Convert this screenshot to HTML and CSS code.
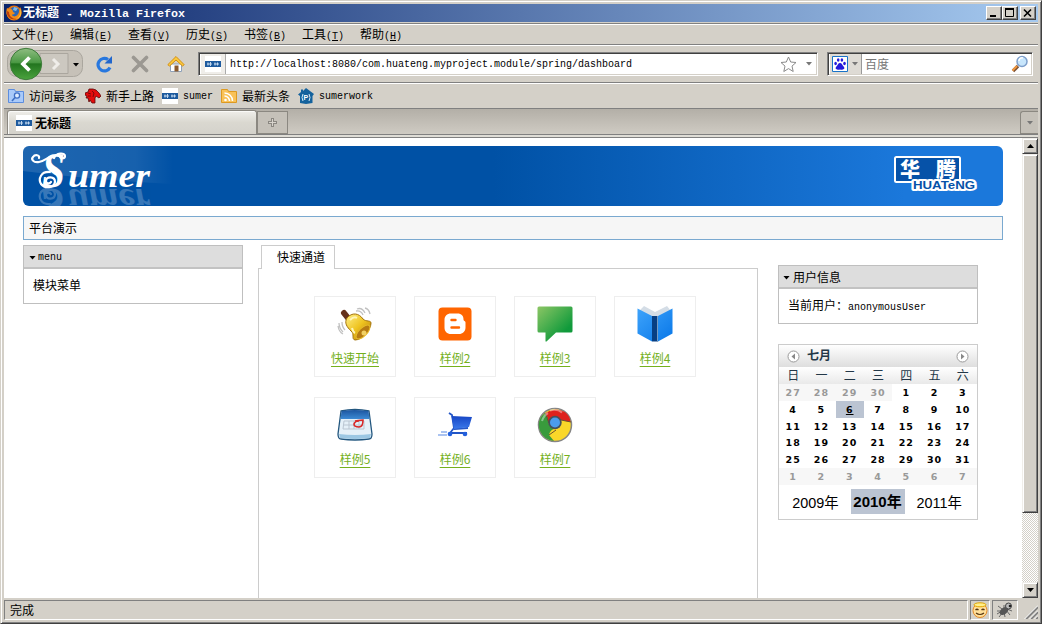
FILE: index.html
```
<!DOCTYPE html>
<html lang="zh-CN">
<head>
<meta charset="utf-8">
<title>无标题</title>
<link rel="stylesheet" href="styles.css">
</head>
<body>
<svg class="defs" width="0" height="0">
  <defs>
    <symbol id="favicon" viewBox="0 0 16 16">
      <rect width="16" height="16" fill="#fff"/>
      <rect y="5" width="16" height="6" fill="#1d5a9e"/>
      <path d="M2 8h5M3 6.500v3M5.500 6v4M9 8h5M10 6.500v3M12.500 6.500v3" stroke="#c3d8ee" stroke-width="1"/>
    </symbol>
    <linearGradient id="green" x2="0" y2="1"><stop offset="0" stop-color="#8fbd82"/><stop offset=".45" stop-color="#4c9a45"/><stop offset=".5" stop-color="#23751f"/><stop offset="1" stop-color="#4ba43e"/></linearGradient>
    <linearGradient id="bubble" x2="1" y2="1"><stop offset="0" stop-color="#8cc665"/><stop offset=".75" stop-color="#109a3b"/></linearGradient>
    <linearGradient id="gold" x2="1" y2="1"><stop offset="0" stop-color="#fff08a"/><stop offset=".5" stop-color="#eec31f"/><stop offset="1" stop-color="#a96e08"/></linearGradient>
    <linearGradient id="blueBox" x2="0" y2="1"><stop offset="0" stop-color="#1c559f"/><stop offset="1" stop-color="#3c8ad4"/></linearGradient>
    <linearGradient id="cart" x2="0" y2="1"><stop offset="0" stop-color="#1746c5"/><stop offset="1" stop-color="#3978ea"/></linearGradient>
    <linearGradient id="page" x2="1" y2="1"><stop offset="0" stop-color="#3ea3fb"/><stop offset="1" stop-color="#0877e8"/></linearGradient>
  </defs>
</svg>
<div class="window">
  <header class="titlebar">
    <svg width="16" height="16" viewBox="0 0 16 16"><circle cx="8" cy="8" r="7.500" fill="#e57512"/><circle cx="8.500" cy="7" r="5" fill="#2d66b4"/><path d="M8 2l4 1-2 3-3-1z" fill="#7fb9e8"/><path d="M1 3l2 1c2-1 4 1 4 3l2 1c-1 2-3 1-3 2 2 3 6 1 7-3l1-5c4 6 0 13-6 13S-1 9 1 3z" fill="#f28b17"/><path d="M1 6c-1 6 5 10 10 8-5 0-8-3-8-7z" fill="#bc3e0d"/><path d="M13 3c3 4 1 9-3 11 5-1 7-7 3-11z" fill="#ffd54a"/></svg>
    <span class="title">无标题<span class="m"> - Mozilla Firefox</span></span>
    <span class="controls">
      <button class="ctl"><svg width="14" height="12"><path d="M3 9h6" stroke="#000" stroke-width="2"/></svg></button><button class="ctl"><svg width="14" height="12"><path d="M2.500 2.500h8v7h-8z" fill="none" stroke="#000"/><path d="M2 2h9" stroke="#000" stroke-width="2"/></svg></button><button class="ctl close"><svg width="14" height="12"><path d="M3 2.500l7 7M10 2.500l-7 7" stroke="#000" stroke-width="1.600"/></svg></button>
    </span>
  </header>
  <nav class="menubar">
    <span>文件<span class="m">(<u>F</u>)</span></span><span>编辑<span class="m">(<u>E</u>)</span></span><span>查看<span class="m">(<u>V</u>)</span></span><span>历史<span class="m">(<u>S</u>)</span></span><span>书签<span class="m">(<u>B</u>)</span></span><span>工具<span class="m">(<u>T</u>)</span></span><span>帮助<span class="m">(<u>H</u>)</span></span>
  </nav>
  <div class="toolbar">
    <svg class="navbtns" width="82" height="36" viewBox="0 0 82 36">
      <rect x="3.500" y="4.500" width="75" height="26" rx="9" fill="#c6c1b8" stroke="#aaa69e"/>
      <path d="M36 7.500h28v20H36z" fill="#ccc8c0" stroke="#aaa69e"/>
      <path d="M49 13l5 5-5 5" fill="none" stroke="#efede9" stroke-width="3"/>
      <path d="M69 17h6l-3 3.500z" fill="#000"/>
      <circle cx="22" cy="18" r="15.700" fill="url(#green)" stroke="#3f7c3b"/>
      <path d="M25.500 11.500L19 18l6.500 6.500" fill="none" stroke="#fff" stroke-width="3.800"/>
    </svg>
    <svg class="tool" width="18" height="18" viewBox="0 0 18 18"><path d="M15 12.500A6.300 6.300 0 1 1 13 4.500" fill="none" stroke="#2878df" stroke-width="3.200"/><path d="M17 1v7.500H9.500z" fill="#2166cc"/></svg>
    <svg class="tool" width="18" height="18" viewBox="0 0 18 18"><path d="M2.500 2.500l13 13M15.500 2.500l-13 13" stroke="#9b9892" stroke-width="3.600" stroke-linecap="round"/></svg>
    <svg class="tool" width="18" height="18" viewBox="0 0 18 18"><path d="M3.500 9h11v7.500h-11z" fill="#fff" stroke="#8fa1b8"/><path d="M7.500 10.500h4v6h-4z" fill="#8b5a2e"/><path d="M9 1.500L.8 9.700 2.500 11 9 5l6.500 6 1.700-1.300z" fill="#fcca3c" stroke="#d28e13"/></svg>
    <div class="url">
      <span class="urlicon"><svg width="16" height="16"><use href="#favicon"/></svg></span>
      <span class="m address">http://localhost:8080/com.huateng.myproject.module/spring/dashboard</span>
      <svg width="17" height="17" viewBox="0 0 17 17"><path d="M8.500 1l2.200 5 5.300.5-4 3.600 1.200 5.400-4.700-2.900-4.700 2.900L5 10.100 1 6.500 6.300 6z" fill="#fff" stroke="#8a8a8a"/></svg>
      <svg class="drop" width="6" height="4"><path d="M0 0h6L3 3.500z" fill="#777"/></svg>
    </div>
    <div class="search">
      <span class="engine"><svg width="16" height="16" viewBox="0 0 16 16"><path d="M.5.500h15v15H.5z" fill="#fff" stroke="#1873c8"/><g fill="#2319dc"><ellipse cx="3.600" cy="7.500" rx="1.300" ry="1.700"/><ellipse cx="6.200" cy="4" rx="1.300" ry="1.700"/><ellipse cx="9.900" cy="4" rx="1.300" ry="1.700"/><ellipse cx="12.500" cy="7.500" rx="1.300" ry="1.700"/><path d="M8 7c2 0 2 2 4 4 1.500 2.500-2 3-4 2.500C6 14 2.500 13.500 4 11c2-2 2-4 4-4z"/></g></svg><svg width="6" height="4"><path d="M0 0h6L3 3.500z" fill="#777"/></svg></span>
      <span class="hint">百度</span>
      <svg width="18" height="18" viewBox="0 0 18 18"><path d="M2 16l5-5" stroke="#7b5134" stroke-width="3.400"/><path d="M1.500 15.500l4.500-4.500" stroke="#f0973e" stroke-width="2"/><circle cx="11" cy="6.500" r="5" fill="#c8e6fc" stroke="#7e9fcb" stroke-width="1.500"/><path d="M8 6a3 3 0 0 1 4-3" stroke="#fff" stroke-width="1.500" fill="none"/></svg>
    </div>
  </div>
  <div class="bookmarks">
    <span><svg width="16" height="16" viewBox="0 0 16 16"><path d="M.5 1.500h6l1 2h8v11H.5z" fill="#a9cafa" stroke="#5c8ddd"/><circle cx="9" cy="7.500" r="2.600" fill="#dcebff" stroke="#3f70c5" stroke-width="1.300"/><path d="M7 9.500L4 13" stroke="#3f70c5" stroke-width="1.600"/></svg>访问最多</span>
    <span><svg width="16" height="16" viewBox="0 0 16 16"><path d="M0 5l3-1 1-3 4 0 3 1 3 3 2 3-2 2-3-2-1 2 0 5-3 0-2-3-1 2-1-4-2 0 1-2-2-1z" fill="#e20c0c" stroke="#5d0808" stroke-width=".8"/><path d="M3 5l3 1M3 8l3 0M7 3l2 2-1 4" stroke="#650909" fill="none" stroke-width=".8"/></svg>新手上路</span>
    <span><svg width="16" height="16"><use href="#favicon"/></svg><span class="m">sumer</span></span>
    <span><svg width="16" height="16" viewBox="0 0 16 16"><path d="M.5 1.500h6l1 2h8v11H.5z" fill="#f9c259" stroke="#dd9a22"/><circle cx="4.500" cy="12" r="1.300" fill="#fff"/><path d="M3.500 8a5 5 0 0 1 5 5M3.500 5a8 8 0 0 1 8 8" fill="none" stroke="#fff" stroke-width="1.500"/></svg>最新头条</span>
    <span><svg width="16" height="16" viewBox="0 0 16 16"><path d="M8 0l8 6-1.500 2V15L8 16l-6-1V8L0 6.500 3 4V1.500h2V3z" fill="#14629d"/><path d="M5 6q-2 3.500 0 7M11 6q2 3.500 0 7" fill="none" stroke="#d9edf7"/><text x="5.600" y="12" class="pmark">P</text></svg><span class="m">sumerwork</span></span>
  </div>
  <div class="tabstrip">
    <div class="tab"><svg width="16" height="16"><use href="#favicon"/></svg>无标题</div>
    <div class="newtab"><svg width="9" height="9"><path d="M4.500 0v9M0 4.500h9" stroke="#8a8781" stroke-width="3"/><path d="M4.500 1v7M1 4.500h7" stroke="#d8d4cd"/></svg></div>
    <div class="alltabs"><svg width="6" height="4"><path d="M0 0h6L3 3.500z" fill="#777"/></svg></div>
  </div>
  <div class="viewport">
    <main class="page">
      <div class="banner">
        <svg width="980" height="60" viewBox="0 0 980 60">
          <defs><linearGradient id="sheen"><stop offset="0" stop-color="#fff" stop-opacity=".12"/><stop offset=".75" stop-color="#fff" stop-opacity=".09"/><stop offset="1" stop-color="#fff" stop-opacity="0"/></linearGradient>
          <clipPath id="low"><path d="M14 42h120v18H14z"/></clipPath></defs>
          <path d="M0 0h150v38Q70 34 0 25z" fill="url(#sheen)"/>
          <g id="logo" class="brand"><text x="19" y="41" font-size="50" textLength="23" lengthAdjust="spacingAndGlyphs">S</text><text x="45" y="41" font-size="34" textLength="82" lengthAdjust="spacingAndGlyphs">umer</text><path d="M31 12c-4-4-8 3-15 4-6 1-8-3-6-5 2-3 7-2 6 1M31 12c2-5 11-6 11-2 0 3-5 3-5 0M27 26c-9-1-12 7-9 12 4 5 13 4 14-2 0-6-9-6-9-1 0 3 4 3 5 1" fill="none" stroke="#fff" stroke-width="2.200" stroke-linecap="round"/></g>
          <g clip-path="url(#low)" opacity=".22"><use href="#logo" transform="matrix(1 0 0 -1 0 84)"/></g>
          <rect x="872" y="11" width="65" height="25" rx="1.500" fill="#0652a8" stroke="#fff" stroke-width="2"/>
          <text x="877" y="30.500" class="huacn" textLength="56">华腾</text>
          <text x="890" y="43.300" class="huaen" textLength="62" lengthAdjust="spacingAndGlyphs">HUATeNG</text>
        </svg>
      </div>
      <div class="crumb">平台演示</div>
      <div class="columns">
        <section class="panel side">
          <h2><i class="tri"></i><span class="m">menu</span></h2>
          <p>模块菜单</p>
        </section>
        <section class="tabs">
          <div class="tablabel">快速通道</div>
          <div class="tabbody">
            <a class="card"><svg width="36" height="36" viewBox="0 0 36 36"><path d="M20 3q5-2 8 4M19 5q5-1 7 4M28 2q4 1 5 6M2 17q0 5 4 9M5 16q0 5 3 8M1 20q1 6 5 8" fill="none" stroke="#c1c1c1" stroke-width="1.300"/><path d="M7 7l4 5" stroke="#65311c" stroke-width="6" stroke-linecap="round"/><path d="M10 12c5-6 12-5 16 1 3 3 8 1 8 4 0 6-8 17-16 17-4-1 0-6-4-9-4-4-7-8-4-13z" fill="url(#gold)" stroke="#a3720d"/><ellipse cx="26" cy="26" rx="4" ry="9" transform="rotate(45 26 26)" fill="#b67b12" stroke="#e7bc29"/><circle cx="27" cy="27" r="2.500" fill="#f1d164"/><path d="M13 14q4-4 7-2M15 22q1 4 3 5" stroke="#fff5b9" stroke-width="2" fill="none"/></svg><span>快速开始</span></a>
            <a class="card"><svg width="36" height="36" viewBox="0 0 36 36"><rect x="1.500" y="1.500" width="33" height="33" rx="4" fill="#ff6500"/><path d="M14 7.500h6.500c4 0 6 2.500 6 6 0 2 2 1 2 3v5c0 4-3 6.500-6.500 6.500h-8c-4 0-6.500-2.500-6.500-6.500v-7.500c0-4 2.500-6.500 6.500-6.500z" fill="#fff"/><path d="M14.500 14h4M14.500 21.500h7.500" stroke="#ff6500" stroke-width="2.400" stroke-linecap="round"/></svg><span>样例2</span></a>
            <a class="card"><svg width="36" height="36" viewBox="0 0 36 36"><path d="M2 .5h32a1.500 1.500 0 0 1 1.500 1.500v23a1.500 1.500 0 0 1-1.500 1.500H19L9.500 35.500H8.500v-9H2A1.500 1.500 0 0 1 .5 25V2A1.500 1.500 0 0 1 2 .5z" fill="url(#bubble)"/></svg><span>样例3</span></a>
            <a class="card"><svg width="36" height="36" viewBox="0 0 36 36"><path d="M2 5l5-5 11 6L30 0l4 5-16 8z" fill="#d4dde6"/><path d="M.5 2.500L15 10v25.500L.5 27.500zM35.500 2.500L21 10v25.500l14.500-8z" fill="url(#page)"/><path d="M15 10h6v25.500h-6z" fill="#063e83"/><path d="M20.500 10v25.500" stroke="#789bc0"/></svg><span>样例4</span></a>
            <a class="card"><svg width="36" height="36" viewBox="0 0 36 36"><path d="M4 4q14-3 28 0l3 23q0 5-3 5-14 2-28 0-3 0-3-5z" fill="#e5f0f8" stroke="#23577f" stroke-width="1.300"/><path d="M4.500 4q13-2 27 0l1 8H3.500z" fill="url(#blueBox)"/><path d="M7 14h20v8H6zM12 14v8M17 14v8M22 14v8M7 18h20" fill="none" stroke="#bac5d1"/><path d="M2 27q16 2 32 0l-1 4q-15 2-30 0z" fill="#9cc7e3"/><path d="M18 14q7-1 8-1 0 7-4 7-5 0-5-3 1-3 5-3" fill="none" stroke="#d92828" stroke-width="1.600"/></svg><span>样例5</span></a>
            <a class="card"><svg width="36" height="36" viewBox="0 0 36 36"><path d="M12 6l3 2 2 13-4 5h17M17 22l14-1" fill="none" stroke="#2356c7" stroke-width="1.800"/><path d="M14.500 9l20.500 1-3 10-15 2z" fill="url(#cart)"/><circle cx="13" cy="27" r="2.300" fill="#2360dd"/><circle cx="28" cy="27" r="2.300" fill="#2360dd"/><path d="M4 25h6M1 28h9" stroke="#8eb0ed" stroke-width="1.500"/></svg><span>样例6</span></a>
            <a class="card"><svg width="36" height="36" viewBox="0 0 36 36"><circle cx="18" cy="18" r="16.500" fill="#fad729" stroke="#858585" stroke-width="1.500"/><path d="M8.500 6Q18-.5 28 5q5 4 5.500 10l-14.500-3q-6 0-8 6z" fill="#de211c"/><path d="M8 6Q-1 13 3 24q4 9 14 10l-5-6q1-5 5-6-7-4-6-11z" fill="#399b3c"/><path d="M8 6l4 10M34 15l-15-3M12 28l7-5" stroke="#6b5130" fill="none"/><circle cx="18" cy="15.500" r="6.700" fill="#45515b"/><circle cx="18" cy="15.500" r="5" fill="#4b9ced"/><path d="M5 14q2-6 6-8M13 3.500q7-2 12 2" stroke="#fff" stroke-opacity=".4" fill="none" stroke-width="2"/></svg><span>样例7</span></a>
          </div>
        </section>
        <aside class="right">
          <section class="panel user">
            <h2><i class="tri"></i>用户信息</h2>
            <p>当前用户：<span class="m">anonymousUser</span></p>
          </section>
          <section class="calendar">
            <header><svg width="13" height="13"><circle cx="6.500" cy="6.500" r="5.500" fill="#fff" stroke="#999"/><path d="M8 3.500v6L4.500 6.500z" fill="#888"/></svg><b>七月</b><svg width="13" height="13"><circle cx="6.500" cy="6.500" r="5.500" fill="#fff" stroke="#999"/><path d="M5 3.500v6l3.500-3z" fill="#888"/></svg></header>
            <div class="week"><span>日</span><span>一</span><span>二</span><span>三</span><span>四</span><span>五</span><span>六</span></div>
            <div class="days">
              <span class="out">27</span><span class="out">28</span><span class="out">29</span><span class="out">30</span><span>1</span><span>2</span><span>3</span>
              <span>4</span><span>5</span><span class="today"><u>6</u></span><span>7</span><span>8</span><span>9</span><span>10</span>
              <span>11</span><span>12</span><span>13</span><span>14</span><span>15</span><span>16</span><span>17</span>
              <span>18</span><span>19</span><span>20</span><span>21</span><span>22</span><span>23</span><span>24</span>
              <span>25</span><span>26</span><span>27</span><span>28</span><span>29</span><span>30</span><span>31</span>
              <span class="out">1</span><span class="out">2</span><span class="out">3</span><span class="out">4</span><span class="out">5</span><span class="out">6</span><span class="out">7</span>
            </div>
            <div class="years"><span>2009年</span><b>2010年</b><span>2011年</span></div>
          </section>
        </aside>
      </div>
    </main>
    <div class="scroll">
      <span class="arrow"><svg width="7" height="4"><path d="M0 4h7L3.500 0z"/></svg></span>
      <span class="thumb"></span>
      <span class="arrow end"><svg width="7" height="4"><path d="M0 0h7L3.500 4z"/></svg></span>
    </div>
  </div>
  <footer class="status">
    <span class="cell msg">完成</span>
    <span class="cell smile"><svg width="16" height="16" viewBox="0 0 16 16"><circle cx="8" cy="8.500" r="7" fill="#ffdf9a" stroke="#e58a24"/><ellipse cx="8" cy="2.800" rx="6" ry="2" fill="#ffef8c" stroke="#e3a400"/><path d="M3.500 8q1.500-1.500 3 0M9.500 8q1.500-1.500 3 0M4 11q4 3 8 0" fill="none" stroke="#553511" stroke-width="1.200"/></svg></span>
    <span class="cell bug"><svg width="18" height="16" viewBox="0 0 18 16"><path d="M2 4l4 3M1 9h5M3 15l4-5M8 3v4M9 15l-1-5M14 13l-4-5M1 12l5-3M16 9l-5-2" stroke="#666"/><ellipse cx="8" cy="9" rx="5" ry="3.200" transform="rotate(-40 8 9)" fill="#565656"/><circle cx="12.500" cy="4" r="3" fill="#bbb" stroke="#444"/><circle cx="14" cy="4" r="1.300" fill="#222"/></svg></span>
    <svg class="grip" width="14" height="14"><path d="M2 14L14 2M7 14l7-7M12 14l2-2" stroke="#808080" stroke-width="2"/><path d="M.5 14L14 .5M5.500 14L14 5.500M10.500 14l3.500-3.500" stroke="#fff"/></svg>
  </footer>
</div>
</body>
</html>
```

FILE: styles.css
```
* { box-sizing: border-box; }
body { margin: 0; width: 1042px; height: 624px; overflow: hidden; font: 12px "Noto Sans CJK SC", sans-serif; color: #000; }
svg { display: block; flex: none; }
.defs { position: absolute; }
.m { font-family: "Liberation Mono", monospace; font-size: 10px; white-space: pre; }
h2, p { margin: 0; font-size: 12px; font-weight: normal; }

.window { display: flex; flex-direction: column; width: 1042px; height: 624px; padding: 3px; background: #d4d0c8; border: 1px solid; border-color: #d4d0c8 #404040 #404040 #d4d0c8; box-shadow: inset 1px 1px #fff, inset -1px -1px #808080; }
.window > * { flex: none; }

.titlebar { display: flex; align-items: center; height: 18px; padding: 0 2px; background: linear-gradient(90deg, #0a246a, #a6caf0); color: #fff; font-weight: bold; }
.title { margin-left: 1px; flex: 1; line-height: 18px; }
.title .m { font-size: 11.660px; }
.controls { display: flex; }
.ctl { width: 16px; height: 14px; padding: 0; background: #d4d0c8; border: 1px solid; border-color: #fff #404040 #404040 #fff; box-shadow: inset -1px -1px #808080; }
.ctl.close { margin-left: 2px; }

.menubar { display: flex; gap: 16px; height: 22px; margin-top: 1px; padding: 0 8px; border-top: 1px solid #808080; border-bottom: 1px solid #808080; box-shadow: inset 0 1px #fff; line-height: 19px; }
.menubar > span { width: 42px; white-space: nowrap; }

.toolbar { display: flex; align-items: center; height: 38px; border-top: 1px solid #fff; border-bottom: 1px solid #808080; }
.tool { margin-left: 18px; }
.navbtns + .tool { margin-left: 9px; }
.url, .search { display: flex; align-items: center; height: 24px; background: #fff; border: 1px solid; border-color: #808080 #fff #fff #808080; box-shadow: inset 1px 1px #404040, inset -1px -1px #d4d0c8; }
.url { width: 620px; margin-left: 13px; padding-left: 2px; }
.urlicon { display: flex; align-items: center; width: 25px; height: 20px; padding-left: 4px; background: #efede9; border-right: 1px solid #aaa; }
.address { flex: 1; padding-left: 4px; }
.drop { margin: 0 5px 0 9px; }
.search { width: 206px; margin-left: 9px; padding: 0 3px 0 2px; }
.engine { display: flex; align-items: center; gap: 4px; width: 32px; height: 20px; padding-left: 2px; background: #dedbd5; border-right: 1px solid #999; }
.hint { flex: 1; padding: 0 0 2px 3px; color: #777; }

.bookmarks { display: flex; align-items: center; gap: 8px; height: 26px; padding-left: 4px; border-top: 1px solid #fff; border-bottom: 1px solid #808080; }
.bookmarks > span { display: flex; align-items: center; gap: 5px; line-height: 20px; white-space: nowrap; }
.bookmarks .m { padding-top: 2px; }
.pmark { font: bold 7px "Liberation Sans", sans-serif; fill: #fff; }

.tabstrip { display: flex; align-items: flex-end; height: 29px; padding: 0 0 3px 3px; background: linear-gradient(#b3afa7, #d0ccc4 26px, #e2e0d8 26px); border-bottom: 1px solid #808080; box-shadow: inset 0 -2px #dfddd6, inset 0 -3px #808080; }
.tab { display: flex; align-items: center; gap: 3px; width: 250px; height: 24px; padding-left: 8px; background: linear-gradient(#efeeea, #dad8d0 50%, #d4d2cb); border: 1px solid #8b8881; border-bottom: 0; border-radius: 3px 3px 0 0; box-shadow: inset 1px 1px #fafaf8; font-weight: bold; }
.newtab { display: flex; align-items: center; justify-content: center; width: 31px; height: 23px; background: #c5c1b9; border: 1px solid #8b8881; }
.alltabs { display: flex; align-items: center; justify-content: center; width: 18px; height: 23px; margin-left: auto; background: #c5c1b9; border: 1px solid #8b8881; border-right: 0; border-radius: 3px 0 0 0; }

.viewport { display: flex; height: 460px; background: #fff; }
.page { width: 1018px; padding: 8px 19px 0; overflow: hidden; }
.banner { width: 980px; height: 60px; border-radius: 6px; overflow: hidden; background: linear-gradient(90deg, #0051a5 0, #0051a5 48%, #1b78db 90%); }
.brand { font: italic bold 33px "Liberation Serif", serif; fill: #fff; }
.huacn { font: 900 20px "Noto Sans CJK SC", sans-serif; fill: #fff; }
.huaen { font: bold 10.500px "Liberation Sans", sans-serif; fill: #0652a8; stroke: #fff; stroke-width: 4px; stroke-linejoin: round; paint-order: stroke; }
.crumb { width: 980px; height: 24px; margin-top: 10px; padding-left: 5px; border: 1px solid #7aa9d0; background: #f6f6f6; line-height: 21px; }
.columns { display: flex; align-items: flex-start; margin-top: 5px; }
.panel { border: 1px solid #bfbfbf; }
.panel h2 { display: flex; align-items: center; height: 23px; padding-left: 5px; background: #ddd; border-bottom: 2px solid #c2c2c2; line-height: 20px; }
.panel h2 .m { padding-top: 3px; }
.panel p { height: 34px; padding-left: 9px; line-height: 32px; }
.tri { width: 7px; height: 4px; margin: 2px 3px 0 0; margin-left: -1px; background: #000; clip-path: polygon(0 0, 100% 0, 50% 100%); }
.side { width: 220px; height: 59px; }
.side .tri { margin-left: 0; margin-right: 2px; }
.tabs { width: 500px; margin-left: 15px; }
.tablabel { position: relative; width: 74px; height: 24px; margin-left: 3px; padding-left: 15px; background: #fff; border: 1px solid #ccc; border-bottom: 0; line-height: 21px; white-space: nowrap; }
.tabbody { display: grid; grid-template-columns: repeat(4, 82px); grid-auto-rows: 81px; gap: 20px 18px; height: 340px; margin-top: -1px; padding: 27px 0 0 55px; border: 1px solid #ccc; }
.card { display: flex; flex-direction: column; align-items: center; padding-top: 9px; border: 1px solid #eee; color: #74b01c; }
.card span { margin-top: 6px; line-height: 20px; text-decoration: underline; text-underline-offset: 3px; }
.right { width: 200px; margin: 20px 0 0 20px; }
.user { height: 59px; }
.calendar { height: 176px; margin-top: 20px; border: 1px solid #ccc; }
.calendar header { display: flex; align-items: center; height: 22px; padding: 0 8px; background: linear-gradient(#fff, #dedede); color: #233747; line-height: 20px; }
.calendar header b { flex: 1; margin: -2px 0 0 7px; }
.week, .days { display: grid; grid-template-columns: repeat(7, 1fr); text-align: center; }
.week { height: 17px; background: linear-gradient(#fff, #e9e9e9); line-height: 16px; color: #233747; }
.days { grid-auto-rows: 16.800px; font: bold 9.500px/18px "DejaVu Sans", sans-serif; letter-spacing: 1px; }
.out { background: #f7f7f7; color: #999; }
.today { background: #bbc4d2; }
.years { display: flex; justify-content: center; align-items: center; gap: 12px; height: 35px; padding: 0 2px 1px 0; font: 14.400px "Liberation Sans", "Noto Sans CJK SC", sans-serif; }
.years b { width: 54px; height: 25px; background: #bbc4d2; line-height: 25px; text-align: center; font-size: 15px; }

.scroll { display: flex; flex-direction: column; width: 16px; background: repeating-conic-gradient(#fff 0 25%, #d4d0c8 0 50%) 0 0 / 2px 2px; }
.arrow, .thumb { background: #d4d0c8; border: 1px solid; border-color: #f0eeea #404040 #404040 #f0eeea; box-shadow: inset 1px 1px #fff, inset -1px -1px #808080; }
.arrow { display: flex; align-items: center; justify-content: center; height: 16px; }
.thumb { height: 359px; }
.arrow.end { margin-top: auto; }

.status { display: flex; gap: 2px; height: 22px; padding-top: 2px; }
.cell { display: flex; align-items: center; justify-content: center; height: 20px; border: 1px solid; border-color: #808080 #fff #fff #808080; }
.msg { width: 964px; justify-content: flex-start; padding: 0 0 2px 5px; }
.smile { width: 20px; }
.bug { width: 26px; }
.grip { margin: 5px 0 0 4px; }
```
